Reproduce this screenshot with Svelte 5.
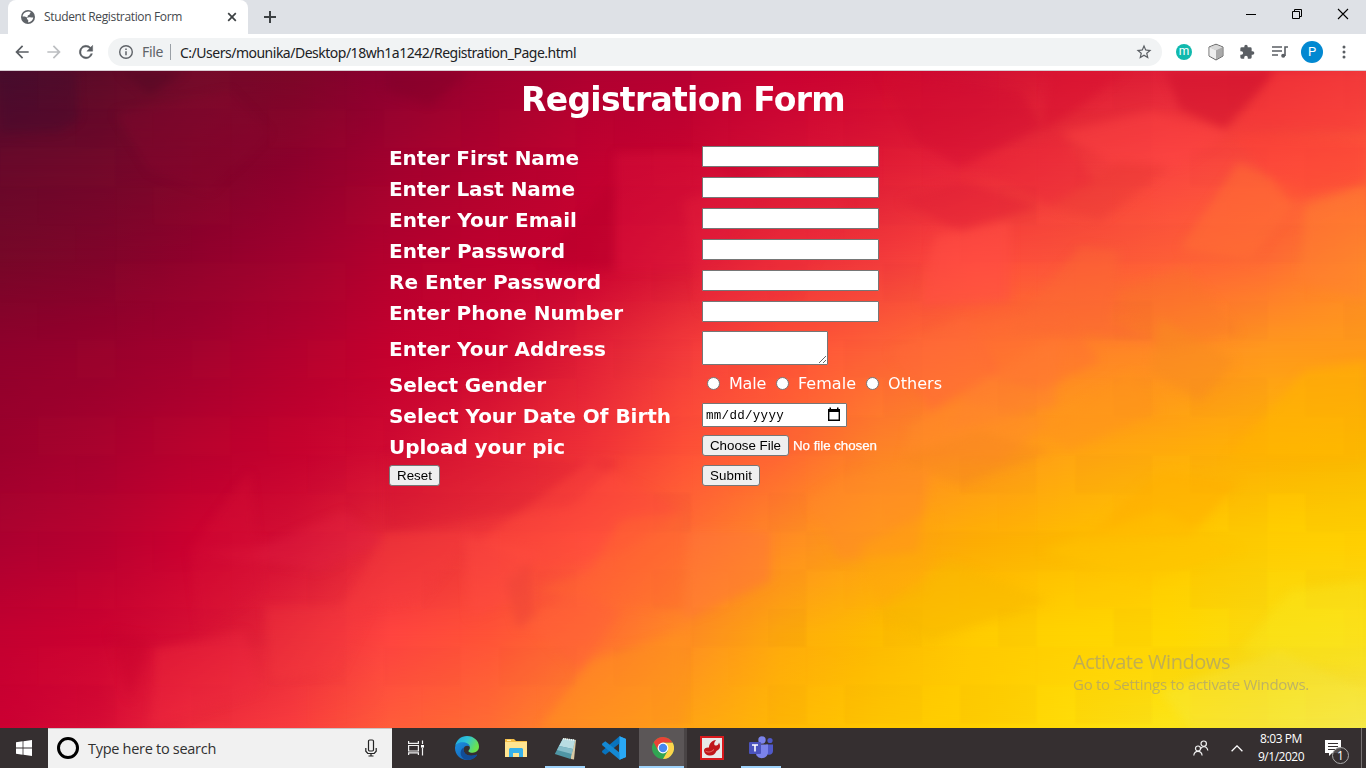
<script>
  const fields = [
    ['Enter First Name', 190, 'text'],
    ['Enter Last Name', 186, 'text'],
    ['Enter Your Email', 188, 'text'],
    ['Enter Password', 176, 'password'],
    ['Re Enter Password', 212, 'password'],
    ['Enter Phone Number', 234, 'text']
  ];
  const genders = [['Male', 37], ['Female', 58], ['Others', 54]];

  // Backdrop colours, one list per horizontal line, left to right.
  const mesh = [
    '4a0e2c 5a0a28 720a2a 7c0828 8c0030 a0002e b00030 b80032 c80032 ce062f d00f33 dc1834 e02038 e52535 f03a3c',
    '66082a 70082a 7e062a 8c002c a2002e b0002e c00030 c8042f d51035 e01b36 e8253a f03a3c fa4540 fc503c ff5a3a',
    '760828 80052a 90002c a0002e b4002e c0002e c80030 d81434 ec2c38 f23a3c ff4c3e fc543a ff6038 ff6c34 ff8a28',
    '90002c 98002c a4002e b4002e c4002e cc0630 e01e36 f43c3c ff5238 ff6438 ff7430 ff8428 ff8c24 ff9c1c ff9c18',
    '9c002c a8002e b8002e c4002e d00a32 e01c34 f03038 ff5038 ff6434 ff8428 ff9420 ffa414 ffac0c ffb404 fcbc00',
    'ac0030 b80030 cc0030 d40f34 e62a38 f23a3a ff503c ff6c34 ff8c24 ffa414 ffb004 ffbc00 ffc800 ffd000 ffd400',
    'c40030 cc0230 d81034 e82a3a ff4440 ff5238 ff6a34 ff8c24 ffac0c fdbc00 ffcc00 ffd400 ffd800 fadc10 fce018',
    'cc0032 d80c36 ee2c3c f83c3e ff5c3a ff6c34 ff8c24 ffa414 ffb804 ffc800 ffd000 ffdc08 fce418 f8e430 f6ea48'
  ].map((row) => `linear-gradient(to right, ${row.split(' ').map((c) => '#' + c).join(', ')})`);

  // Creases of the crumpled surface: points, colour, opacity.
  const facets = [
    ['0,0 76,0 78,48 60,60 0,62', '#3a0a30', 0.3],
    ['120,0 185,0 150,24', '#4a0824', 0.4],
    ['115,42 230,20 270,62 210,120 150,100', '#8a0830', 0.3],
    ['385,0 470,0 430,34 385,20', '#780026', 0.3],
    ['615,82 700,82 760,130 700,200 615,200', '#e01840', 0.3],
    ['540,190 615,110 615,200', '#b00028', 0.3],
    ['683,130 790,100 850,130 790,230 700,240', '#f02a40', 0.24],
    ['1050,0 1125,0 1080,36 1042,60', '#d80f30', 0.5],
    ['1165,0 1275,0 1225,58 1180,38', '#d0102e', 0.55],
    ['1275,0 1366,0 1366,60 1235,58', '#f83a3a', 0.5],
    ['880,0 1020,20 1042,56 960,96 915,70', '#cf0a30', 0.4],
    ['975,92 1060,62 1095,110 1050,135 1000,110', '#e82438', 0.4],
    ['1060,62 1150,40 1230,62 1180,94 1110,92', '#ff4644', 0.4],
    ['960,110 1040,135 960,160 900,130', '#dc1c34', 0.4],
    ['1050,135 1120,90 1170,95 1100,150', '#e83834', 0.4],
    ['1238,92 1305,120 1250,190 1180,178', '#ff7034', 0.5],
    ['1230,62 1366,70 1366,112 1290,130', '#fc4038', 0.45],
    ['935,165 1010,150 1010,230 920,235', '#ff4e44', 0.5],
    ['1080,176 1120,180 1110,250 1160,270 1010,260', '#fc6834', 0.5],
    ['970,250 1060,240 1100,290 1040,320 990,305', '#ff6c34', 0.4],
    ['1115,220 1185,195 1240,262 1160,280', '#f47428', 0.3],
    ['1305,135 1366,115 1366,230 1300,210', '#ff8030', 0.45],
    ['1160,248 1235,290 1200,330 1150,300', '#f88c20', 0.5],
    ['890,280 965,245 1000,300 930,340', '#ff6a38', 0.5],
    ['970,315 1060,265 1055,335 945,360', '#ff7c34', 0.4],
    ['910,352 960,330 1050,350 1000,390 905,385', '#ff8c28', 0.45],
    ['808,430 850,402 930,398 918,480 840,490', '#ff8a28', 0.5],
    ['900,385 980,360 1050,380 960,415', '#f48420', 0.35],
    ['1040,360 1130,300 1160,340 1070,380', '#ff941c', 0.5],
    ['1225,390 1305,300 1366,290 1366,390', '#ffb400', 0.5],
    ['1080,470 1160,400 1240,410 1190,465', '#ffae00', 0.5],
    ['1040,480 1160,440 1240,480 1150,510', '#ffc400', 0.45],
    ['385,382 620,390 570,435 385,460', '#d01030', 0.25],
    ['250,480 345,440 385,470 320,500 190,480', '#e62444', 0.3],
    ['385,462 475,462 420,530 340,540', '#f43c3c', 0.4],
    ['480,470 590,390 683,440 620,480 540,500', '#ff4c3c', 0.4],
    ['465,465 540,480 510,530 470,548', '#ff4a40', 0.4],
    ['505,510 530,490 535,545 518,558', '#ec4438', 0.5],
    ['535,520 590,500 620,450 683,440 683,540', '#ff6a30', 0.4],
    ['525,550 575,520 620,540 580,600', '#ff6238', 0.45],
    ['690,460 770,460 770,510 683,550', '#ff7838', 0.5],
    ['860,475 935,440 925,520 880,540', '#ffa40c', 0.4],
    ['875,540 950,490 1050,530 930,570', '#f8b800', 0.5],
    ['265,535 370,535 340,600 270,610', '#fa3c40', 0.3],
    ['155,578 245,560 260,620 150,657', '#f02c40', 0.35],
    ['110,560 150,568 130,630', '#c4002c', 0.3],
    ['190,480 250,400 260,520 200,560', '#d81034', 0.3],
    ['540,657 590,590 683,560 683,657', '#ff941c', 0.45],
    ['1290,520 1366,510 1366,600 1240,580', '#f8e820', 0.35],
    ['1160,620 1280,580 1366,620 1366,657 1190,657', '#f5ec50', 0.25]
  ];

  const blocks = Array.from({ length: 210 }, (_, i) => {
    const n = (i * 7919 + 104729) % 612;
    return { x: (n % 36) * 38.4, y: Math.floor(n / 36) * 38.4, light: (i * 31) % 7 > 3, w: (i % 3) + 1 };
  });

  // Tracks a line of text so that it spans the given number of pixels.
  function span(node, width) {
    const natural = node.getBoundingClientRect().width;
    const count = node.textContent.length;
    node.style.letterSpacing = `${(width - natural) / count}px`;
  }
</script>

<div class="screen">
  <header class="tabs">
    <div class="tab">
      <svg class="globe" width="14" height="14" viewBox="0 0 14 14"><circle cx="7" cy="7" r="7" fill="#5f6368" /><path d="M7.5 1.5 9.5 2c.3 1-.8 1.3-.8 2.2 0 .8-1.5.8-2 1.500-.4.6.5 1.200-.4 1.700-.7.4-1.500-.8-2.500-.8H1.600C1.800 3.800 4 1.600 7.500 1.500zM8 7.300c1.400-.4 2.600.3 4.300.3-.3 2.700-2.300 4.500-4.800 4.800-.9-1 .2-1.700-.4-2.500-.5-.7-1.200-.3-1.200-1.200C5.900 7.700 7 7.600 8 7.300z" fill="#fff" /></svg>
      <span class="tab-title"><span use:span={138}>Student Registration Form</span></span>
      <svg width="10" height="10" viewBox="0 0 10 10"><path d="m1.200 1.200 7.600 7.600M8.800 1.200 1.200 8.800" stroke="#3c4043" stroke-width="1.700" /></svg>
    </div>
    <svg class="plus" width="12" height="12" viewBox="0 0 12 12"><path d="M6 0v12M0 6h12" stroke="#3c4043" stroke-width="2" /></svg>
    <div class="window-buttons">
      <svg width="12" height="12" viewBox="0 0 12 12"><path d="M1 6.500h10" stroke="#000" /></svg>
      <svg width="12" height="12" viewBox="0 0 12 12" fill="none" stroke="#000"><path d="M1.500 3.500h7v7h-7zM3.500 3.500v-2h7v7h-2" /></svg>
      <svg width="12" height="12" viewBox="0 0 12 12"><path d="m1 1 10 10M11 1 1 11" stroke="#000" stroke-width="1.100" /></svg>
    </div>
  </header>

  <nav class="toolbar">
    <div class="nav-icons">
      <svg width="20" height="20" viewBox="0 0 24 24" fill="#5a5e63"><path d="M20 11H7.830l5.590-5.590L12 4l-8 8 8 8 1.410-1.410L7.830 13H20z" /></svg>
      <svg width="20" height="20" viewBox="0 0 24 24" fill="#bcbec1"><path d="m12 4-1.410 1.410L16.170 11H4v2h12.170l-5.580 5.590L12 20l8-8z" /></svg>
      <svg width="20" height="20" viewBox="0 0 24 24" fill="#5a5e63" stroke="#5a5e63" stroke-width=".5"><path d="M17.650 6.350A8 8 0 1 0 19.730 14h-2.080A6 6 0 1 1 12 6c1.660 0 3.140.690 4.220 1.780L13 11h7V4z" /></svg>
    </div>
    <div class="address">
      <svg width="16" height="16" viewBox="0 0 16 16"><circle cx="8" cy="8" r="6.300" fill="none" stroke="#5f6368" stroke-width="1.400" /><path d="M8 7.200v4M8 4.400v1.500" stroke="#5f6368" stroke-width="1.500" /></svg>
      <span class="scheme"><span use:span={21}>File</span></span>
      <span class="url"><span use:span={396}>C:/Users/mounika/Desktop/18wh1a1242/Registration_Page.html</span></span>
      <svg class="star" width="18" height="18" viewBox="0 0 24 24" fill="#5a5e63"><path d="m22 9.240-7.190-.620L12 2 9.190 8.630 2 9.240l5.460 4.730L5.820 21 12 17.270 18.180 21l-1.630-7.030zM12 15.400l-3.760 2.270 1-4.280-3.320-2.880 4.380-.380L12 6.100l1.710 4.040 4.380.380-3.320 2.880 1 4.280z" /></svg>
    </div>
    <div class="extensions">
      <span class="badge teal">m</span>
      <svg width="18" height="18" viewBox="0 0 18 18"><path d="M9 1.200 16 4v9l-7 4-7-4V4z" fill="#bbb" stroke="#666" /><path d="m2.500 4.300 6.500 3v9l-6.500-3.600z" fill="#eee" /><path d="m9 7.300 6.500-3v8.400L9 16.300z" fill="#aaa" /><path d="M9 1.800 15.500 4.300 9 7.200 2.500 4.300z" fill="#d8d8d8" /></svg>
      <svg width="16" height="16" viewBox="0 0 24 24" fill="#5a5e63"><path d="M20.500 11H19V7a2 2 0 0 0-2-2h-4V3.500a2.500 2.500 0 0 0-5 0V5H4a2 2 0 0 0-2 2v3.800h1.500a2.700 2.700 0 0 1 0 5.400H2V20a2 2 0 0 0 2 2h3.800v-1.500a2.700 2.700 0 0 1 5.400 0V22H17a2 2 0 0 0 2-2v-4h1.500a2.500 2.500 0 0 0 0-5z" /></svg>
      <svg class="queue" width="18" height="18" viewBox="0 0 18 18" fill="none" stroke="#5a5e63" stroke-width="1.600"><path d="M1 4h10M1 8h10M1 12h6M14 13V4h3" /><circle cx="12.200" cy="12.800" r="2" fill="#5a5e63" stroke="none" /></svg>
      <span class="badge blue">P</span>
      <svg width="18" height="18" viewBox="0 0 18 18" fill="#5a5e63"><circle cx="9" cy="4" r="1.500" /><circle cx="9" cy="9" r="1.500" /><circle cx="9" cy="14" r="1.500" /></svg>
    </div>
  </nav>

  <main class="page">
    <div class="backdrop">
      {#each mesh.slice(0, -1) as row, i}
        <div class="strip" style:background={row}>
          <div class="fade" style:background={mesh[i + 1]}></div>
        </div>
      {/each}
      <svg class="creases" viewBox="0 0 1366 657" preserveAspectRatio="none">
        <g class="blocks">
          {#each blocks as b}
            <rect x={b.x} y={b.y} width={38.4 * b.w} height="38.4" fill={b.light ? '#ff6040' : '#b00020'} opacity="0.018" />
          {/each}
        </g>
        <g class="facets">
          {#each facets as [points, fill, opacity]}
            <polygon {points} {fill} {opacity} />
          {/each}
        </g>
      </svg>
    </div>

    <h1><span use:span={324}>Registration Form</span></h1>
    <form onsubmit={(e) => e.preventDefault()}>
      {#each fields as [label, width, type]}
        <b><span use:span={width}>{label}</span></b>
        <div><input class="line" {type} aria-label={label} /></div>
      {/each}
      <b><span use:span={217}>Enter Your Address</span></b>
      <div><textarea aria-label="Enter Your Address"></textarea></div>
      <b><span use:span={157}>Select Gender</span></b>
      <div class="genders">
        {#each genders as [name, width]}
          <label><i class="radio"></i><span use:span={width}>{name}</span></label>
        {/each}
      </div>
      <b><span use:span={282}>Select Your Date Of Birth</span></b>
      <div>
        <div class="date">
          <span use:span={78}>mm/dd/yyyy</span>
          <svg width="14" height="15" viewBox="0 0 14 15"><path d="M1.700 2.700h10.600v10.600H1.700z" fill="none" stroke="#000" stroke-width="1.400" /><path d="M1 2h12v3H1zM2.500.500H4V3H2.500zM10 .5h1.500V3H10z" /></svg>
        </div>
      </div>
      <b><span use:span={176}>Upload your pic</span></b>
      <div class="file">
        <button type="button" class="choose"><span use:span={71}>Choose File</span></button>
        <em><span use:span={84}>No file chosen</span></em>
      </div>
      <div><button type="reset" class="reset"><span use:span={35}>Reset</span></button></div>
      <div><button class="submit"><span use:span={42}>Submit</span></button></div>
    </form>

    <aside class="watermark">
      <p class="big"><span use:span={157}>Activate Windows</span></p>
      <p><span use:span={236}>Go to Settings to activate Windows.</span></p>
    </aside>
  </main>

  <footer class="taskbar">
    <div class="start"><svg width="16" height="16" viewBox="0 0 16 16" fill="#fff"><path d="M0 2.200 6.600 1.300v6.300H0zM7.400 1.200 16 0v7.600H7.400zM0 8.400h6.600v6.300L0 13.800zM7.400 8.400H16V16l-8.600-1.200z" /></svg></div>
    <div class="search">
      <i class="cortana"></i>
      <span class="hint"><span use:span={128}>Type here to search</span></span>
      <svg width="12" height="18" viewBox="0 0 12 18" fill="none" stroke="#222" stroke-width="1.200"><rect x="3.500" y="1" width="5" height="11" rx="1.200" /><path d="M.8 9v3.200l2 2.300h6.400l2-2.300V9M6 14.500v2.600M3.500 17h5" /></svg>
    </div>
    <div class="view"><svg width="18" height="18" viewBox="0 0 18 18" fill="none" stroke="#f0f0f0" stroke-width="1.200"><path d="M1.600 2v2.400h9.800V2M1.600 6.500h9.800v5.500H1.600zM1.600 16v-2.200h9.800V16M15.500 1.500v3.500M15.500 9v7.500" /><path d="M14 6h3v2.600h-3z" fill="#fff" stroke="none" /></svg></div>
    <div class="apps">
      <div>
        <svg width="24" height="24" viewBox="0 0 24 24">
          <defs>
            <linearGradient id="edge-top" x1="0" y1="0" x2="1" y2=".4"><stop offset="0" stop-color="#1ca6dd" /><stop offset=".5" stop-color="#2fc3d8" /><stop offset="1" stop-color="#6be34c" /></linearGradient>
            <linearGradient id="edge-low" x1="0" y1="0" x2="1" y2="1"><stop offset="0" stop-color="#1b8fdf" /><stop offset="1" stop-color="#1459ad" /></linearGradient>
          </defs>
          <path d="M.2 10C1.200 4 6 0 12 0c7 0 12 5 12 10.600 0 4-3 6.100-6.200 6.100-2.700 0-4.400-.9-4.400-1.800 0-.8 1.500-1.200 1.500-3.200 0-2.500-2.700-4.500-6-4.500C4.800 7.200 1.500 8 .2 10z" fill="url(#edge-top)" />
          <path d="M0 12c0-3.600 3.200-5.800 7.300-5.800 4.300 0 7.200 2 7.500 4.300-5-2.300-6.600 1.600-6.200 4.200.7 4.200 6 6.600 12.300 4.300.9-.4 1.200.1.700.8C19.400 22.600 16 24 12 24 5.400 24 0 18.600 0 12z" fill="url(#edge-low)" />
          <path d="M8.800 11.500c-1.200 5.500 3.200 10 12.300 7.300.7-.3 1.300.1.800.8-3 4-8 5-11.500 4C4.500 21.500 4.200 14 8.800 11.500z" fill="#124c96" />
        </svg>
      </div>
      <div><svg width="22" height="20" viewBox="0 0 22 20"><path d="M0 1h9l2 2h11v16H0z" fill="#f4bd45" /><path d="M0 4h22v15H0z" fill="#ffe591" /><path d="M2 1.800h4v1.200H2z" fill="#fff0b0" /><path d="M4 19v-8l1-1h12l1 1v8h-4v-4H8v4z" fill="#36b1ea" /></svg></div>
      <div class="open"><svg width="23" height="23" viewBox="0 0 23 23"><path d="m9 1 13 2-2 19.500-3-.5z" fill="#d8c9a4" /><path d="M9 1.500 21 3l-4.500 19L.8 17z" fill="#4f96a5" /><path d="M9 1.500 21 3l-2 9L5 9z" fill="#b9dde2" /><path d="m5 9 14 3-1.200 5L3 13z" fill="#85bcc8" /><path d="m9 1.800 12 1.500" stroke="#f4f4f4" stroke-width="1.600" stroke-dasharray="1 1" /></svg></div>
      <div><svg width="24" height="24" viewBox="0 0 24 24"><path d="M17.500.200 24 3v18l-6.500 2.800L17 17z" fill="#26a4f2" /><path d="M17.500.200 18 7 3.300 18.700.3 16.500 0 15z" fill="#0873be" /><path d="M17.500 23.800 18 17 3.300 5.300.3 7.500 0 9z" fill="#1489d4" /><path d="M17.500.200 24 3v18l-6.500 2.800z" fill="#29a8f5" /></svg></div>
      <div class="open active">
        <svg width="22" height="22" viewBox="0 0 24 24"><circle cx="12" cy="12" r="12" fill="#31a552" /><path d="M12 6h10.400A12 12 0 0 1 12 24l5.200-9z" fill="#fdd44b" /><path d="M12 12V6h10.400A12 12 0 0 0 1.800 5.700L6.800 15z" fill="#e94235" /><circle cx="12" cy="12" r="5.900" fill="#fff" /><circle cx="12" cy="12" r="4.600" fill="#4688f0" /></svg>
      </div>
      <div><svg width="24" height="24" viewBox="0 0 24 24"><path d="M1 1h22v22H1z" fill="#e8e8e8" stroke="#d8191d" stroke-width="2" /><path d="M4 14.500c0-2 2-3.300 5-3 0-4 3-7 7-7.500-2 2.500-2.500 5-.5 5.500 2 .4 3-1 3.500-3 2 4 1 7-2.500 8.500C15 18.500 12.500 20 9 19.500c-3-.4-5-2.500-5-5z" fill="#c0161a" /><path d="M5.500 15c2 1.500 5.500 1.500 8.500-1.500" stroke="#e9716c" fill="none" /></svg></div>
      <div class="open"><svg width="24" height="24" viewBox="0 0 24 24"><circle cx="21" cy="4.500" r="2.600" fill="#5059c9" /><circle cx="13" cy="4" r="3.700" fill="#7b83eb" /><path d="M17 8.500h7V15c0 4-5 5-7 2z" fill="#5059c9" /><path d="M7 8.500h12V16c0 8-12 8-12 1z" fill="#7b83eb" /><rect y="6" width="12" height="12" rx="1" fill="#4b53bc" /><path d="M3 9h6M6 9v6.500" stroke="#fff" stroke-width="1.600" /></svg></div>
    </div>
    <div class="tray">
      <svg class="people" width="16" height="16" viewBox="0 0 16 16" fill="none" stroke="#f0f0f0" stroke-width="1.200"><circle cx="10.700" cy="3.700" r="2.700" /><circle cx="5" cy="8.500" r="2.500" /><path d="M7.500 9c1-3 6.500-3.500 7.300 1.500M.8 15.500c.5-5.500 7.700-5.500 8.300 0" /></svg>
      <svg class="chevron" width="12" height="7" viewBox="0 0 12 7"><path d="m.6 6.300 5.400-5.400 5.400 5.400" fill="none" stroke="#fff" stroke-width="1.300" /></svg>
      <div class="clock"><p><span use:span={42}>8:03 PM</span></p><p><span use:span={46}>9/1/2020</span></p></div>
      <div class="notice">
        <svg width="16" height="16" viewBox="0 0 16 16"><path d="M0 0h16v13H7l-3 3v-3H0z" fill="#fff" /><path d="M3 3.500h10M3 6.500h10M3 9.500h7" stroke="#352f30" /></svg>
        <span class="count">1</span>
      </div>
      <i class="edge"></i>
    </div>
  </footer>
</div>

<style>
  :global(body) { margin: 0; overflow: hidden; }
  .screen { width: 1366px; height: 768px; display: flex; flex-direction: column; font-family: "Open Sans", "Noto Sans", sans-serif; overflow: hidden; }
  .screen span { white-space: nowrap; }
  svg { display: block; flex: none; }
  p, h1 { margin: 0; }

  .tabs { height: 34px; flex: none; background: #dee1e6; display: flex; align-items: center; padding-left: 8px; box-sizing: border-box; }
  .tab { width: 240px; height: 34px; background: #fff; border-radius: 8px 8px 0 0; display: flex; align-items: center; padding: 0 11px 0 13px; box-sizing: border-box; }
  .tab-title { width: 183px; margin: -1px 0 0 9px; font-size: 12px; color: #45494d; }
  .plus { margin-left: 16px; }
  .window-buttons { margin-left: auto; display: flex; gap: 34px; padding: 0 17px 6px 0; }

  .toolbar { height: 37px; flex: none; box-sizing: border-box; background: #fff; border-bottom: 1px solid #d8cdd2; display: flex; align-items: center; }
  .nav-icons { width: 96px; padding-left: 12px; box-sizing: border-box; display: flex; gap: 12px; }
  .address { width: 1054px; height: 28px; margin-left: 12px; padding: 0 9px 0 10px; box-sizing: border-box; border-radius: 14px; background: #f1f3f4; display: flex; align-items: center; font: 14px "Noto Sans", sans-serif; color: #202124; }
  .scheme { margin-left: 8px; width: 28px; color: #5f6368; border-right: 1px solid #9aa0a6; line-height: 16px; }
  .url { margin-left: 9px; }
  .star { margin-left: auto; }
  .extensions { display: flex; align-items: center; padding-left: 13px; gap: 14px; }
  .badge { border-radius: 50%; color: #fff; text-align: center; font-family: Roboto, sans-serif; }
  .teal { width: 16px; height: 16px; line-height: 14px; font-size: 12px; background: #10b9ad; margin: 0 1px; }
  .queue { margin-left: 2px; }
  .blue { width: 22px; height: 22px; line-height: 22px; font-size: 13px; background: #0288d1; margin: 0 -2px; }

  .page { position: relative; height: 657px; flex: none; color: #fff; overflow: hidden; isolation: isolate; }
  .backdrop { position: absolute; inset: 0; z-index: -1; display: flex; flex-direction: column; }
  .strip { flex: 1; }
  .fade { height: 100%; -webkit-mask-image: linear-gradient(transparent, #000); mask-image: linear-gradient(transparent, #000); }
  .creases { position: absolute; inset: 0; width: 100%; height: 100%; }
  .blocks { filter: blur(1px); }
  .facets { filter: blur(5px); }

  h1 { height: 70px; padding-top: 9px; box-sizing: border-box; text-align: center; font: bold 33px/40px "DejaVu Sans", sans-serif; }
  form { display: grid; grid-template-columns: 313px auto; grid-template-rows: repeat(6, 31px) 41px repeat(3, 31px) 28px; align-items: center; justify-content: start; padding-left: 389px; font: 16px "DejaVu Sans", sans-serif; }
  form b { font-size: 20px; line-height: 24px; padding-top: 2px; }
  form > div { display: flex; align-items: center; }
  .line, textarea, .date { box-sizing: border-box; border: 1px solid #767676; background: #fff; border-radius: 1px; padding: 1px 2px; }
  .line { width: 177px; height: 21px; }
  textarea { width: 126px; height: 34px; resize: both; display: block; }
  .genders { padding-left: 5px; gap: 10px; }
  .genders label { display: flex; align-items: center; gap: 9px; }
  .radio { width: 11px; height: 11px; border: 1px solid #767676; border-radius: 50%; background: #fff; }
  .date { width: 145px; height: 24px; padding: 0 5px 0 3px; color: #000; display: flex; align-items: center; justify-content: space-between; font: 12.500px "Liberation Mono", monospace; }
  .date span { padding-top: 2px; }
  button { height: 21px; box-sizing: border-box; padding: 1px 0 0; border: 1px solid #767676; border-radius: 3px; background: #efefef; color: #000; font: 13.333px/18px "Liberation Sans", sans-serif; }
  .choose { width: 87px; padding-top: 0; }
  .reset { width: 51px; }
  .submit { width: 58px; }
  .file em { margin-left: 4px; font: 13.333px "Liberation Sans", sans-serif; -webkit-text-stroke: .25px #fff; }

  .watermark { position: absolute; left: 1073px; top: 578px; color: rgba(148, 145, 140, .58); font-size: 15px; line-height: 20px; }
  .watermark .big { font-size: 20px; line-height: 25px; }

  .taskbar { height: 40px; flex: none; background: #352f30; display: flex; }
  .start { width: 48px; display: grid; place-items: center; }
  .search { width: 344px; box-sizing: border-box; border-top: 1px solid #c9c5c5; background: #f1f1f1; display: flex; align-items: center; padding: 0 15px 1px 9px; }
  .cortana { width: 16px; height: 16px; border: 3px solid #000; border-radius: 50%; }
  .hint { margin: 0 auto 0 9px; font-size: 14.500px; color: #303030; }
  .view { width: 51px; display: flex; align-items: center; padding-left: 15px; box-sizing: border-box; }
  .apps { display: flex; gap: 1px; }
  .apps > div { width: 48px; height: 40px; display: grid; place-items: center; background: linear-gradient(#9ed2fa, #9ed2fa) center bottom / 0 2px no-repeat; }
  .apps > .open { background-size: 40px 2px; }
  .apps > .active { background-color: #5b5657; background-size: 48px 2px; box-shadow: inset -3px 0 #494445; }
  .tray { margin-left: auto; display: flex; align-items: center; color: #fff; }
  .people { margin-right: 22px; }
  .chevron { margin-right: 8px; }
  .clock { width: 60px; text-align: center; font-size: 12px; line-height: 18px; }
  .notice { position: relative; margin: 0 20px 0 14px; }
  .count { position: absolute; left: 7px; top: 7px; width: 15px; height: 15px; border: 1px solid #aaa; border-radius: 50%; background: rgba(53, 47, 48, .85); text-align: center; font-size: 12px; line-height: 15px; }
  .edge { width: 4px; height: 40px; border-left: 1px solid #777273; }
</style>
